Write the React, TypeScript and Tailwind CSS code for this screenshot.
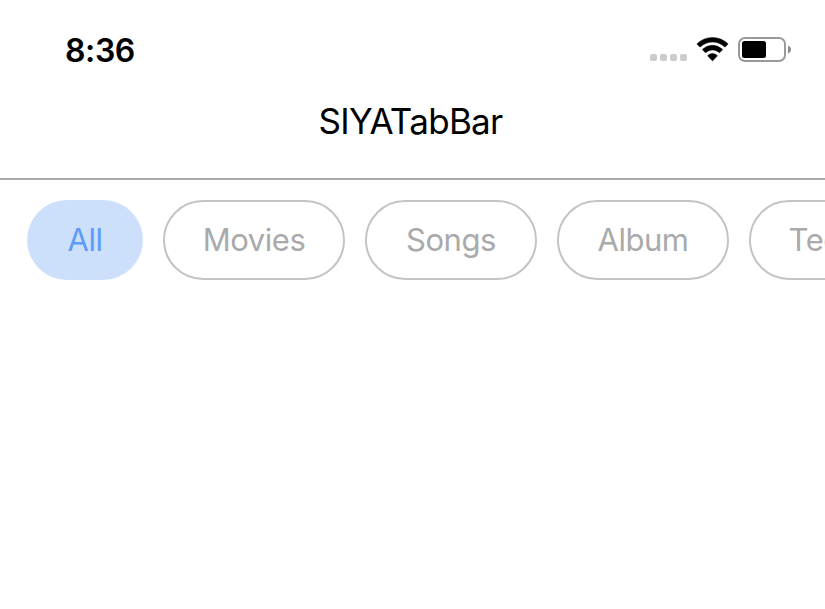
const tabs = [
  { label: "All", width: "w-[116px]", active: true },
  { label: "Movies", width: "w-[182px]", active: false },
  { label: "Songs", width: "w-[172px]", active: false },
  { label: "Album", width: "w-[172px]", active: false },
  { label: "Tech", width: "w-[149px]", active: false },
];

function StatusIcons() {
  return (
    <div className="flex items-start">
      <div className="mt-[17px] flex gap-[3px]">
        {[0, 1, 2, 3].map((i) => (
          <span key={i} className="size-[7px] rounded-[2px] bg-[#cccccc]" />
        ))}
      </div>
      <svg className="ml-[9px] block" width="33" height="25" viewBox="0 0 33 25">
        <path
          d="M16.500 5.100c4.500 0 8.700 1.700 12 4.700.300.300.7.200.900 0l2.300-2.300c.3-.3.300-.7 0-1C23.200-1.500 9.800-1.500 1.300 6.500c-.3.300-.3.700 0 1l2.300 2.300c.2.200.6.300.9 0 3.300-3 7.500-4.700 12-4.700zM16.500 12.900c2.400 0 4.700.9 6.500 2.500.3.200.6.200.9 0l2.300-2.300c.3-.3.300-.7 0-1a14.300 14.300 0 0 0-19.400 0c-.3.300-.3.700 0 1l2.300 2.300c.3.200.6.200.9 0 1.800-1.600 4.100-2.500 6.500-2.500zM21 19.200c.3-.3.300-.7 0-1a7.200 7.200 0 0 0-9 0c-.3.300-.3.700 0 1l4 4.200c.3.300.7.300 1 0z"
          stroke="#000000"
          strokeWidth="0.500"
        />
      </svg>
      <svg className="ml-[9px] block" width="54" height="25" viewBox="0 0 54 25">
        <rect x="1" y="1" width="46" height="23" rx="6" fill="none" stroke="#9a9a9a" strokeWidth="2" />
        <rect x="4" y="4" width="24" height="17" rx="2.500" />
        <path d="M50 8.500v8c4-1.500 4-6.500 0-8z" fill="#8a8a8a" />
      </svg>
    </div>
  );
}

export default function App() {
  return (
    <div className="flex h-[609px] w-full flex-col overflow-hidden bg-white font-['Inter','Liberation_Sans',sans-serif] text-black">
      <div className="flex h-[100px] items-start justify-between pt-[37px] pr-[33px] pl-[65px]">
        <span className="text-[32px] leading-7 font-semibold tracking-[-0.4px]">8:36</span>
        <StatusIcons />
      </div>
      <header className="flex h-20 items-start justify-center border-b-2 border-[#aaaaaa] pt-[3px] pr-1">
        <h1 className="text-[35px] leading-9 tracking-[-0.7px]">SIYATabBar</h1>
      </header>
      <nav className="flex gap-5 pt-5 pl-[27px]">
        {tabs.map((t) => (
          <button
            key={t.label}
            className={`flex h-20 shrink-0 items-center justify-center rounded-full text-[31px] tracking-[-0.45px] ${t.width} ${t.active ? "bg-[#cce0fc] text-[#5c9cf8]" : "border-2 border-[#c4c4c4] text-[#aaaaaa]"}`}
          >
            {t.label}
          </button>
        ))}
      </nav>
    </div>
  );
}
